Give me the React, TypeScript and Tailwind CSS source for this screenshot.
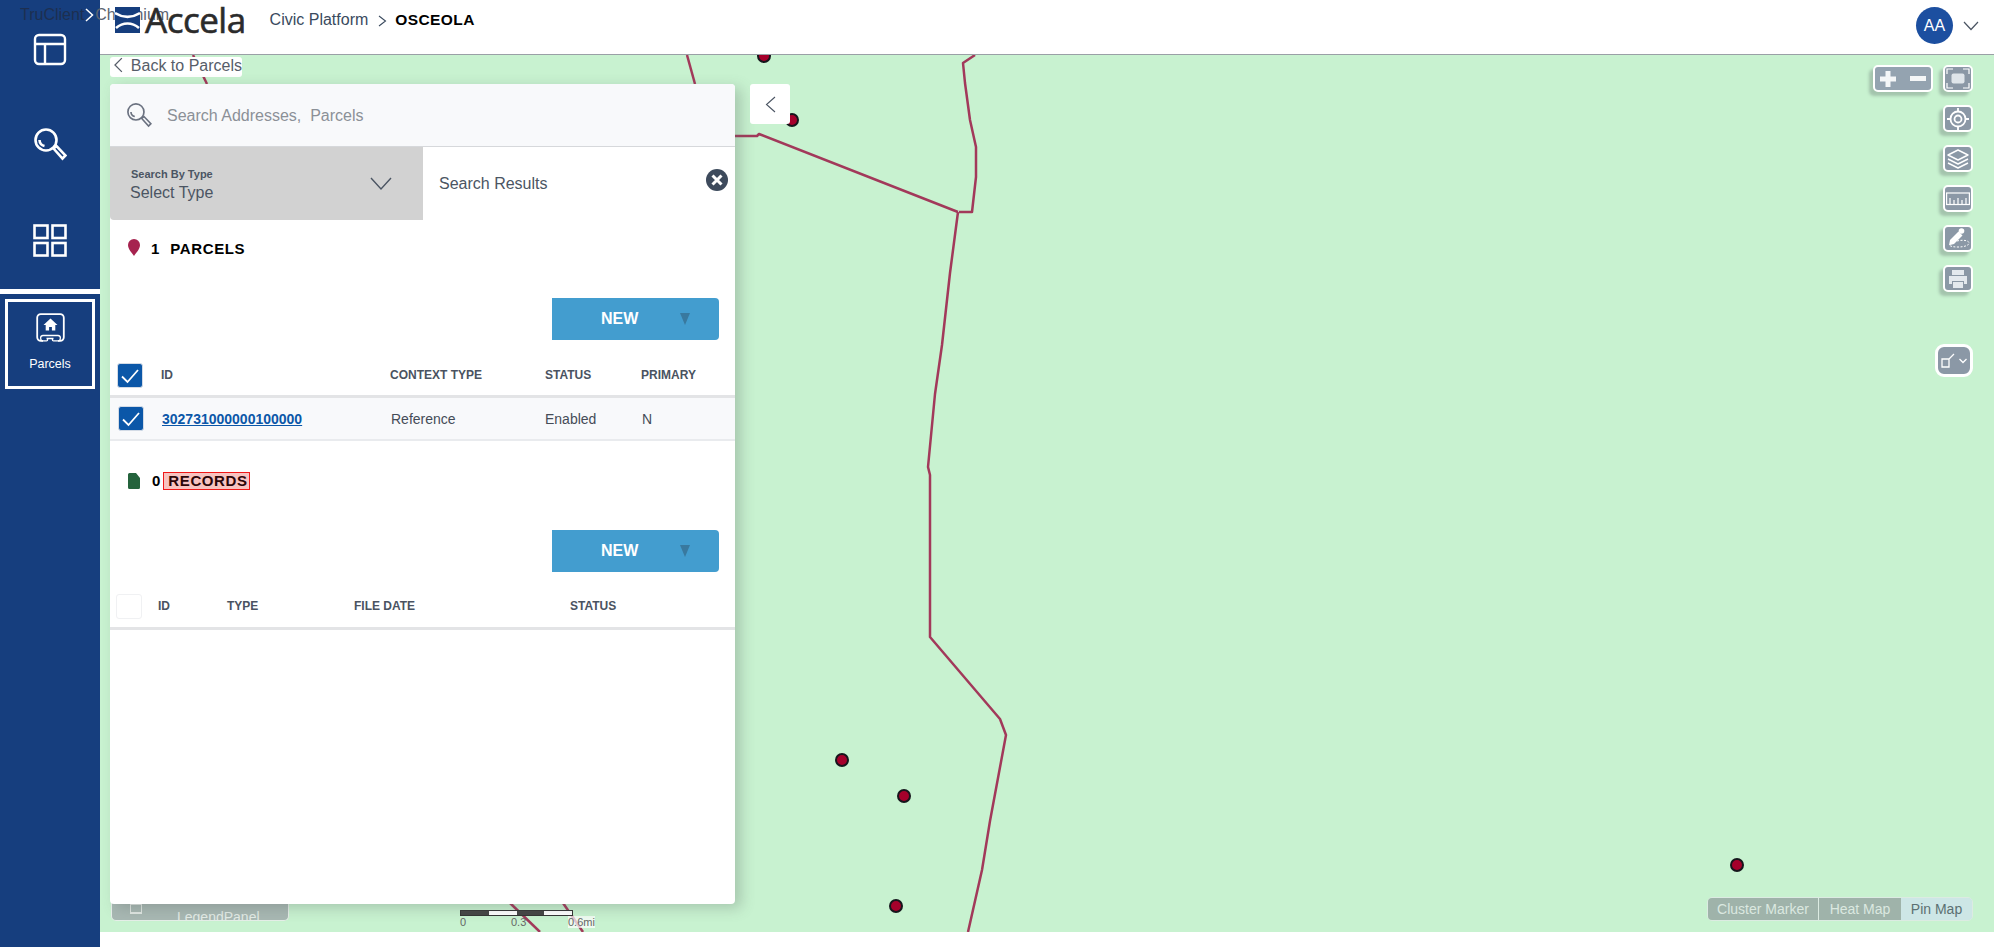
import React from 'react';

const FONT = "font-['Liberation_Sans',Arial,sans-serif]";

// full-page coordinates, svg viewBox is offset so they can be read off the screenshot
const ROADS = [
  '975,55 963,63 965,83 970,120 976,147 976,177 972,212 959,212',
  '958,212 950,273 942,345 935,394 928,467 930,475 930,637 1000,719 1006,735 990,821 982,870 968,932',
  '735,136 757,136 759,134 958,212',
  '687,55 695,84',
  '510,903 540,932',
  '563,903 583,932',
  '193,55 207,84',
];
const PINS = [
  [764, 56],
  [792, 120],
  [842, 760],
  [904, 796],
  [896, 906],
  [1737, 865],
];

const MapLayer = () => (
  <svg className="absolute inset-0" width="1894" height="877" viewBox="100 55 1894 877">
    {ROADS.map((pts) => (
      <polyline key={pts} points={pts} fill="none" stroke="#a2395a" strokeWidth="2.5" strokeLinejoin="round" />
    ))}
    {PINS.map(([x, y]) => (
      <circle key={x} cx={x} cy={y} r="6" fill="#a5002b" stroke="#16161c" strokeWidth="2" />
    ))}
  </svg>
);

const LayoutIcon = () => (
  <svg width="34" height="34" viewBox="0 0 34 34" fill="none" stroke="white" strokeWidth="2.4">
    <rect x="2" y="2" width="30" height="29" rx="4" />
    <path d="M2 11h30M12 11v20" />
  </svg>
);

const SearchIcon = ({ color = 'white', width = 2.6 }: { color?: string; width?: number }) => (
  <svg viewBox="0 0 34 34" className="h-full w-full" fill="none" stroke={color} strokeWidth={width}>
    <circle cx="13" cy="13" r="10.5" />
    <path d="M6.5 13a6.5 6.5 0 0 0 5 6" />
    <path d="M20.5 21.5l3-2.5 9 9.5-3 3z" />
  </svg>
);

const GridIcon = () => (
  <svg width="34" height="33" viewBox="0 0 34 33" fill="none" stroke="white" strokeWidth="2.6">
    <rect x="1.5" y="1.5" width="13" height="12.5" />
    <rect x="19.5" y="1.5" width="13" height="12.5" />
    <rect x="1.5" y="19" width="13" height="12.5" />
    <rect x="19.5" y="19" width="13" height="12.5" />
  </svg>
);

const ParcelIcon = () => (
  <svg width="29" height="29" viewBox="0 0 29 29" fill="none">
    <path d="M7 27.8H4.7a3.5 3.5 0 0 1-3.5-3.5V4.7a3.5 3.5 0 0 1 3.5-3.5h19.6a3.5 3.5 0 0 1 3.5 3.5v19.6a3.5 3.5 0 0 1-3.5 3.5H22" stroke="white" strokeWidth="1.8" />
    <path d="M14.5 5.5l7 6.5h-2.2v5.5h-3.4V14h-2.8v3.5H9.700V12H7.500z" fill="white" />
    <path d="M6 27.800c-2-1-2-5.300 1-5.300h15c3 0 3 4.300 1 5.300h-5.500c-1.500 0-1.500-2.300 0-2.300h-7c1.500 0 1.500 2.300 0 2.300z" stroke="white" strokeWidth="1.300" />
  </svg>
);

const Check = ({ on = true }: { on?: boolean }) => (
  <div
    className={`flex h-[25px] w-[26px] shrink-0 items-center justify-center rounded-[3px] border ${
      on ? 'border-[#d3dbe6] bg-[#0b57a8]' : 'border-[#f0f1f3] bg-white'
    }`}
  >
    {on && (
      <svg width="20" height="16" viewBox="0 0 20 16" fill="none" stroke="white" strokeWidth="1.8">
        <path d="M2 8.5l5.5 5.5L18 2" />
      </svg>
    )}
  </div>
);

const NewButton = () => (
  <div className="flex justify-end pr-[16px]">
    <button className="relative flex h-[42px] w-[167px] items-center rounded-r-[4px] bg-[#439dcf] pl-[49px] text-[16px] font-bold text-white">
      NEW
      <span className="absolute left-[128px] top-[15px] h-0 w-0 border-x-[5.5px] border-t-[12px] border-x-transparent border-t-[#39799f]" />
    </button>
  </div>
);

const Tool = ({ children, mb = 'mb-[13px]' }: { children: React.ReactNode; mb?: string }) => (
  <div
    className={`flex h-[27px] w-[30px] items-center justify-center rounded-[5px] border-2 border-white bg-[#8b98a6] shadow-[-4px_4px_3px_rgba(120,140,130,0.45)] ${mb}`}
  >
    {children}
  </div>
);

const ToolColumn = () => (
  <div className="absolute right-[21px] top-[10px] flex flex-col items-end">
    <div className="flex gap-[10px]">
      <div className="flex h-[27px] w-[60px] items-center justify-between rounded-[5px] border-2 border-white bg-[#94a3b0] px-[5px] shadow-[-4px_4px_3px_rgba(120,140,130,0.45)]">
        <svg width="16" height="16" viewBox="0 0 16 16" fill="#f4f6f7">
          <path d="M5.500 0h5v5.500H16v5h-5.500V16h-5v-5.500H0v-5h5.500z" />
        </svg>
        <span className="block h-[5px] w-[16px] bg-[#f4f6f7]" />
      </div>
      <Tool>
        <svg width="24" height="21" viewBox="0 0 24 21" fill="none" stroke="white" strokeWidth="1.2">
          <path d="M1 6V1h6M17 1h6v5M23 15v5h-6M7 20H1v-5" />
          <rect x="5.500" y="5.500" width="13" height="10" rx="2" fill="#dfe5ea" stroke="none" />
        </svg>
      </Tool>
    </div>
    <Tool>
      <svg width="22" height="22" viewBox="0 0 22 22" fill="none" stroke="white" strokeWidth="1.8">
        <circle cx="11" cy="11" r="7.5" />
        <circle cx="11" cy="11" r="3.5" />
        <path d="M11 0v4M11 18v4M0 11h4M18 11h4" />
      </svg>
    </Tool>
    <Tool>
      <svg width="22" height="22" viewBox="0 0 22 22" fill="none" stroke="white" strokeWidth="1.4" strokeLinejoin="round">
        <path d="M11 2l10 5-10 5L1 7z" />
        <path d="M1 11l10 5 10-5M1 15l10 5 10-5" />
      </svg>
    </Tool>
    <Tool>
      <svg width="24" height="14" viewBox="0 0 24 14" fill="none" stroke="white" strokeWidth="1.2">
        <rect x="0.6" y="1" width="22.8" height="11.5" />
        <path d="M4 12V6M8 12V8M12 12V6M16 12V8M20 12V6" />
      </svg>
    </Tool>
    <Tool>
      <svg width="24" height="23" viewBox="0 0 24 23" fill="none">
        <path d="M4 13L12.500 4.500 16.500 8.500 8 17l-5 1.200z" fill="white" />
        <circle cx="15.500" cy="4" r="2.800" fill="white" />
        <path d="M11 14c6-1.500 12-.5 12 2s-5 4-11 4-8-1-8.500-2" stroke="white" strokeWidth="1" strokeDasharray="2 1.500" />
      </svg>
    </Tool>
    <Tool mb="mb-[52px]">
      <svg width="20" height="20" viewBox="0 0 20 20" fill="#e4e9ee">
        <path d="M4 1h12v5H4zM1 7h18v8h-3v-3H4v3H1zM5 13h10v6H5z" />
      </svg>
    </Tool>
    <div className="flex h-[33px] w-[38px] items-center justify-center gap-[3px] rounded-[9px] border-[3px] border-white bg-[#8b98a6]">
      <svg width="15" height="15" viewBox="0 0 15 15" fill="none" stroke="white" strokeWidth="1.3">
        <path d="M1 6h7v8H1zM8 6l5-5" />
      </svg>
      <svg width="8" height="6" viewBox="0 0 8 6" fill="none" stroke="white" strokeWidth="1.3">
        <path d="M0.5 1l3.5 3.5L7.5 1" />
      </svg>
    </div>
  </div>
);

const ParcelsTable = () => (
  <>
    <div className="flex h-[35px] items-start border-b-[3px] border-[#e3e4e6] pl-[7px] text-[12px] font-bold text-[#4a5361]">
      <Check />
      <span className="ml-[18px] mt-[3px] w-[229px]">ID</span>
      <span className="mt-[3px] w-[155px]">CONTEXT TYPE</span>
      <span className="mt-[3px] w-[96px]">STATUS</span>
      <span className="mt-[3px]">PRIMARY</span>
    </div>
    <div className="flex h-[43px] items-center border-b-2 border-[#e9ebee] bg-[#f8f9fb] pl-[8px] text-[14px] text-[#454c57]">
      <Check />
      <a className="ml-[18px] mt-[1px] w-[229px] text-[14px] font-bold text-[#0b57a8] underline">302731000000100000</a>
      <span className="mt-[1px] w-[154px]">Reference</span>
      <span className="mt-[1px] w-[97px]">Enabled</span>
      <span className="mt-[1px]">N</span>
    </div>
  </>
);

const RecordsTable = () => (
  <div className="mt-[22px] flex h-[36px] items-start border-b-[3px] border-[#e3e4e6] pl-[6px] text-[12px] font-bold text-[#4a5361]">
    <Check on={false} />
    <span className="ml-[16px] mt-[3px] w-[69px]">ID</span>
    <span className="mt-[3px] w-[127px]">TYPE</span>
    <span className="mt-[3px] w-[216px]">FILE DATE</span>
    <span className="mt-[3px]">STATUS</span>
  </div>
);

const SearchPanel = () => (
  <div className="relative z-10 flex h-[820px] w-[625px] flex-col rounded-[4px] bg-white shadow-[6px_4px_14px_rgba(90,100,95,0.3)]">
    <div className="flex h-[63px] items-center rounded-t-[4px] border-b border-[#d6d8db] bg-[#f8f9fb] pl-[16px]">
      <div className="h-[26px] w-[26px]">
        <SearchIcon color="#6b7280" width={2.2} />
      </div>
      <span className="ml-[15px] mt-[2px] text-[16px] text-[#8b9097]">Search Addresses,&nbsp; Parcels</span>
    </div>

    <div className="flex h-[73px]">
      <div className="flex w-[313px] items-center justify-between rounded-bl-[4px] bg-[#d2d2d2] pl-[20px] pr-[31px] pt-[5px]">
        <div className="flex flex-col text-[#4b5563]">
          <span className="pl-[1px] text-[11px] font-bold leading-[14px]">Search By Type</span>
          <span className="text-[16px] leading-[24px]">Select Type</span>
        </div>
        <svg className="mb-[5px]" width="22" height="14" viewBox="0 0 22 14" fill="none" stroke="#4b5563" strokeWidth="1.4">
          <path d="M1 1l10 11L21 1" />
        </svg>
      </div>
      <div className="flex flex-1 items-start justify-between pl-[16px] pr-[7px]">
        <span className="mt-[25px] text-[16px] text-[#4b5563]">Search Results</span>
        <svg className="mt-[22px]" width="22" height="22" viewBox="0 0 22 22">
          <circle cx="11" cy="11" r="11" fill="#3d4a5c" />
          <path d="M6.5 6.5l9 9M15.5 6.5l-9 9" stroke="white" strokeWidth="3" />
        </svg>
      </div>
    </div>

    <div className="mt-[20px] flex h-[18px] items-center pl-[18px] text-[15px] font-bold text-black">
      <svg className="mb-[3px]" width="12" height="17" viewBox="0 0 12 17">
        <path d="M6 0a6 6 0 0 1 6 6c0 4-4 8-6 11C4 14 0 10 0 6a6 6 0 0 1 6-6z" fill="#a6234f" />
      </svg>
      <span className="ml-[11px]">1</span>
      <span className="ml-[11px] tracking-[0.6px]">PARCELS</span>
    </div>

    <div className="mt-[40px]">
      <NewButton />
    </div>
    <div className="mt-[23px]">
      <ParcelsTable />
    </div>

    <div className="mt-[31px] flex h-[18px] items-center pl-[18px] text-[15px] font-bold text-black">
      <svg width="12" height="16" viewBox="0 0 12 16">
        <path d="M0 1.5A1.5 1.5 0 0 1 1.5 0H8l4 5v9.5a1.5 1.5 0 0 1-1.5 1.5h-9A1.5 1.5 0 0 1 0 14.5z" fill="#24633c" />
      </svg>
      <span className="ml-[12px]">0</span>
      <span className="ml-[3px] flex h-[18px] w-[87px] items-center border border-[#f01818] bg-[#f8c3c0] pl-[4px] tracking-[0.6px] text-[#2c0608]">
        RECORDS
      </span>
    </div>

    <div className="mt-[40px]">
      <NewButton />
    </div>
    <RecordsTable />
  </div>
);

const ModeSwitch = () => (
  <div className="absolute bottom-[11px] right-[21px] flex h-[24px] w-[266px] overflow-hidden rounded-[5px] border border-[#dcebe2] text-[14px] leading-[22px]">
    <span className="w-[111px] border-r border-[#dcebe2] bg-[#9fb3aa] text-center text-[#dbe8e0]">Cluster Marker</span>
    <span className="w-[82px] bg-[#9fb3aa] text-center text-[#dbe8e0]">Heat Map</span>
    <span className="flex-1 bg-[#cde6e6] text-center text-[#5c7072]">Pin Map</span>
  </div>
);

const ScaleBar = () => (
  <div className="absolute bottom-[4px] left-[360px] w-[140px] text-[11px] leading-[12px] text-[#666]">
    <div className="flex h-[6px] w-[113px] border border-[#333]">
      <span className="flex-1 bg-[#444]" />
      <span className="flex-1 bg-white" />
      <span className="flex-1 bg-[#444]" />
      <span className="flex-1 bg-white" />
    </div>
    <div className="relative h-[12px]">
      <span className="absolute left-0">0</span>
      <span className="absolute left-[51px]">0.3</span>
      <span className="absolute left-[108px] bg-white/70">0.6mi</span>
    </div>
  </div>
);

const Legend = () => (
  <div className="absolute bottom-[11px] left-[11px] h-[18px] w-[178px] overflow-hidden rounded-b-[5px] border-x border-b border-[#e6efe9] bg-[#a8b8b3]">
    <span className="absolute left-[18px] top-[1px] h-[10px] w-[12px] border border-b-2 border-[#e2e8e4]" />
    <span className="absolute left-[65px] top-[7px] text-[14px] leading-[15px] text-[#e4ece7]">LegendPanel</span>
  </div>
);

const Header = () => (
  <header className="flex h-[55px] shrink-0 items-start justify-between border-b border-[#9aa0a6] bg-white">
    <div className="flex items-start">
      <svg className="relative z-30 ml-[15px] mt-[7px]" width="25" height="26" viewBox="0 0 25 26">
        <rect width="25" height="26" fill="#163e7e" />
        <path d="M0 6c8 5 17 5 25 0M1 21c7-6 16-6 23 0" fill="none" stroke="white" strokeWidth="2.6" />
      </svg>
      <span className="relative z-30 ml-[5px] mt-[1px] font-['Open_Sans',sans-serif] text-[35px] leading-[38px] tracking-[-0.5px] text-[#2b2b2b] [-webkit-text-stroke:0.6px_#2b2b2b]">
        Accela
      </span>
      <span className="ml-[24px] mt-[11px] text-[16px] leading-[18px] text-[#3a4a5e]">Civic Platform</span>
      <svg className="ml-[10px] mt-[15px]" width="9" height="12" viewBox="0 0 9 12" fill="none" stroke="#3a4a5e" strokeWidth="1.1">
        <path d="M1 1l6.5 5L1 11" />
      </svg>
      <span className="ml-[8px] mt-[11px] text-[15.5px] font-bold leading-[18px] tracking-[0.4px] text-black">OSCEOLA</span>
    </div>
    <div className="mr-[15px] mt-[7px] flex items-center gap-[10px]">
      <div className="flex h-[37px] w-[37px] items-center justify-center rounded-full bg-[#1c4fa0] text-[16px] text-white">AA</div>
      <svg width="16" height="10" viewBox="0 0 16 10" fill="none" stroke="#4b5563" strokeWidth="1.2">
        <path d="M1 1l7 7.5L15 1" />
      </svg>
    </div>
  </header>
);

const Sidebar = () => (
  <aside className="flex w-[100px] shrink-0 flex-col items-center bg-[#163e7e]">
    <div className="mt-[33px]">
      <LayoutIcon />
    </div>
    <div className="mt-[60px] h-[34px] w-[34px]">
      <SearchIcon />
    </div>
    <div className="mt-[63px]">
      <GridIcon />
    </div>
    <div className="mt-[32px] h-[5px] w-full bg-white" />
    <div className="mt-[5px] flex h-[90px] w-[90px] flex-col items-center border-[3px] border-white pt-[11px]">
      <ParcelIcon />
      <span className="mt-[15px] text-[12.5px] leading-[14px] text-white">Parcels</span>
    </div>
  </aside>
);

export default function App() {
  return (
    <div className={`relative flex h-[947px] w-full overflow-hidden bg-white ${FONT}`}>
      <Sidebar />
      <main className="flex flex-1 flex-col">
        <Header />
        <div className="relative h-[877px] bg-[#c8f2d0] pl-[10px] pt-[29px]">
          <MapLayer />
          <Legend />
          <ScaleBar />
          <ModeSwitch />
          <ToolColumn />
          <div className="absolute left-[10px] top-[2px] z-10 flex h-[20px] w-[132px] items-start rounded-[3px] bg-white pl-[3px] text-[16px] leading-[18px] text-[#565d69]">
            <svg width="10" height="16" viewBox="0 0 10 16" fill="none" stroke="#565d69" strokeWidth="1.3">
              <path d="M9 1L2 8l7 7" />
            </svg>
            <span className="ml-[8px] whitespace-nowrap">Back to Parcels</span>
          </div>
          <div className="flex items-start">
            <SearchPanel />
            <button className="relative z-10 ml-[15px] flex h-[40px] w-[40px] items-center justify-center rounded-[3px] bg-white">
              <svg width="11" height="17" viewBox="0 0 11 17" fill="none" stroke="#4b5563" strokeWidth="1.1">
                <path d="M10 1L1.5 8.5 10 16" />
              </svg>
            </button>
          </div>
        </div>
      </main>
      {/* automation overlay text from the capture tool */}
      <div className="absolute left-[20px] top-[5px] z-20 flex items-center text-[16px] leading-[20px] text-[#1d2f50]">
        <span>TruClient</span>
        <svg className="mx-[1px]" width="9" height="14" viewBox="0 0 9 14" fill="none" stroke="white" strokeWidth="1.5">
          <path d="M1 1l6.5 6L1 13" />
        </svg>
        <span className="text-[#5c6470]">Chromium</span>
      </div>
    </div>
  );
}
